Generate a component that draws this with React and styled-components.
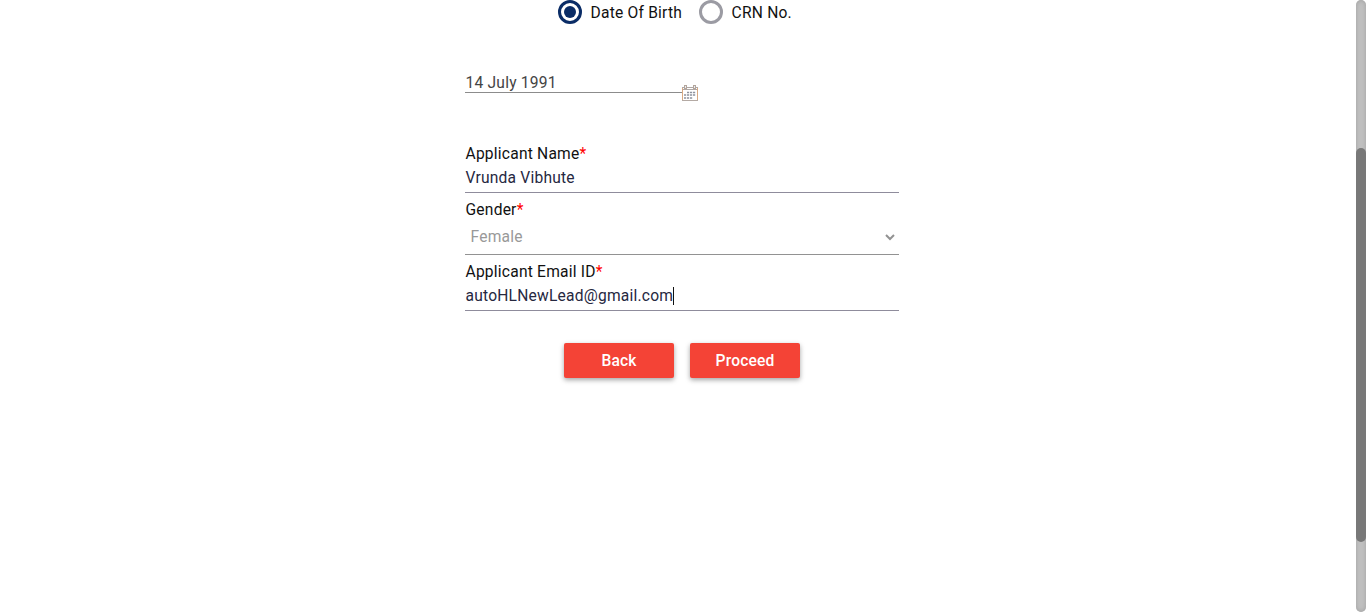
import React from "react";
import styled, { createGlobalStyle } from "styled-components";

const GlobalStyle = createGlobalStyle`
  * { box-sizing: border-box; }
  body {
    margin: 0;
    background: #fff;
    font-family: Roboto, "Liberation Sans", sans-serif;
    font-size: 15.6px;
    letter-spacing: 0.21px;
    text-indent: 0.5px;
    color: #111;
    overflow: hidden;
  }
`;

const Page = styled.div`
  display: flex;
  height: 612px;
`;

const Main = styled.main`
  flex: 1;
  display: flex;
  flex-direction: column;
  align-items: center;
  padding-left: 8px;
`;

const Form = styled.form`
  width: 434px;
  display: flex;
  flex-direction: column;
`;

const RadioGroup = styled.div`
  display: flex;
  gap: 17px;
  height: 24px;
  padding-left: 93px;
`;

const RadioOption = styled.label`
  display: flex;
  gap: 8px;
  line-height: 26px;
  white-space: nowrap;
`;

const RadioMark = styled.span`
  display: flex;
  align-items: center;
  justify-content: center;
  width: 24px;
  height: 24px;
  border: 3px solid ${(p) => (p.$checked ? "#0a2c66" : "#9b9ba3")};
  border-radius: 50%;

  &::after {
    content: "";
    width: 12px;
    height: 12px;
    border-radius: 50%;
    background: ${(p) => (p.$checked ? "#0a2c66" : "transparent")};
  }
`;

const DateRow = styled.div`
  display: flex;
  align-items: flex-start;
  margin-top: 49px;
  height: 69px;
`;

const DateValue = styled.div`
  width: 217px;
  height: 20px;
  line-height: 20px;
  border-bottom: 1px solid #8c8c8c;
  color: #444;
`;

const CalendarIcon = styled.svg`
  margin-top: 12px;
  display: block;
`;

const Field = styled.div`
  display: flex;
  flex-direction: column;
  height: ${(p) => p.$height}px;
  padding-top: ${(p) => p.$top || 0}px;
  border-bottom: 1px solid ${(p) => p.$line || "#8f8c9c"};
`;

const Label = styled.label`
  line-height: 24px;
`;

const Required = styled.span`
  color: #f00;
`;

const Value = styled.div`
  display: flex;
  align-items: center;
  height: 24px;
  line-height: 24px;
  color: #26283f;
`;

const Caret = styled.span`
  width: 1px;
  height: 18px;
  background: #111;
`;

const Select = styled.div`
  display: flex;
  align-items: center;
  justify-content: space-between;
  height: 30px;
  padding: 0 4px 0 5px;
  line-height: 24px;
  color: #999;
`;

const Actions = styled.div`
  display: flex;
  justify-content: center;
  gap: 16px;
  margin-top: 32px;
`;

const Button = styled.button`
  width: 110px;
  height: 35px;
  padding: 0;
  border: 0;
  border-radius: 2px;
  background: #f44336;
  color: #fff;
  font: 500 15.6px Roboto, "Liberation Sans", sans-serif;
  letter-spacing: 0.15px;
  box-shadow: 0 2px 5px 0 rgba(0, 0, 0, 0.36);
`;

const ScrollTrack = styled.div`
  width: 10px;
  padding-top: 148px;
  border-radius: 5px;
  background: #c1c1c1;
  box-shadow: inset 0 0 5px #a0a0a0;
`;

const ScrollThumb = styled.div`
  height: 394px;
  border-radius: 5px;
  background: #787878;
`;

const Radio = ({ checked, children }) => (
  <RadioOption>
    <RadioMark $checked={checked} />
    {children}
  </RadioOption>
);

export default function App() {
  return (
    <Page>
      <GlobalStyle />
      <Main>
        <Form>
          <RadioGroup>
            <Radio checked>Date Of Birth</Radio>
            <Radio>CRN No.</Radio>
          </RadioGroup>
          <DateRow>
            <DateValue>14 July 1991</DateValue>
            <CalendarIcon width="16" height="16" viewBox="0 0 16 16" fill="none">
              <path d="M.5 2v13.5M15.5 2v13.5" stroke="#d9a982" />
              <path d="M0 15.5h16" stroke="#b4aaa4" />
              <path d="M0 2.5h16M1 4.5h14" stroke="#b0a8a5" />
              <path d="M2 0h3v4H2zM11 0h3v4h-3z" fill="#b3a59b" />
              <path d="M3 1h1v2H3zM12 1h1v2h-1z" fill="#e9eef6" />
              <path d="M5 7.5h9M2 10h12M2 13h9" stroke="#8f929d" strokeWidth="1.6" strokeDasharray="2.2 .8" />
            </CalendarIcon>
          </DateRow>
          <Field $height={51}>
            <Label>Applicant Name<Required>*</Required></Label>
            <Value>Vrunda Vibhute</Value>
          </Field>
          <Field $height={62} $top={5} $line="#929292">
            <Label>Gender<Required>*</Required></Label>
            <Select>
              Female
              <svg width="10" height="7" viewBox="0 0 10 7" fill="none">
                <path d="M1 1l4 4 4-4" stroke="#929292" strokeWidth="2" />
              </svg>
            </Select>
          </Field>
          <Field $height={56} $top={5}>
            <Label>Applicant Email ID<Required>*</Required></Label>
            <Value>autoHLNewLead@gmail.com<Caret /></Value>
          </Field>
          <Actions>
            <Button type="button">Back</Button>
            <Button type="button">Proceed</Button>
          </Actions>
        </Form>
      </Main>
      <ScrollTrack>
        <ScrollThumb />
      </ScrollTrack>
    </Page>
  );
}
